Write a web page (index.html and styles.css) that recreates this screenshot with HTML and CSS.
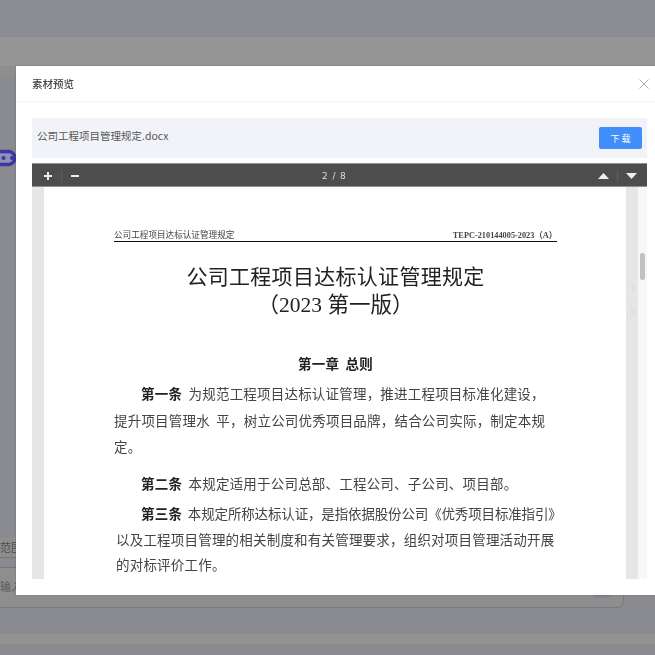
FILE: index.html
```html
<!DOCTYPE html>
<html lang="zh-CN">
<head>
<meta charset="utf-8">
<title>素材预览</title>
<link rel="stylesheet" href="styles.css">
</head>
<body>
<div class="backdrop">
  <div class="band-top"></div>
  <div class="band-light"></div>
  <div class="band-head"></div>
  <div class="page-mid">
    <svg class="bot" width="17" height="18" viewBox="0 0 17 18"><rect x="-6" y="2.500" width="21" height="13" rx="6.500" fill="#8f90b4" stroke="#3b37a3" stroke-width="3.500"/><circle cx="3.500" cy="9" r="2" fill="#3b37a3"/><circle cx="12" cy="9" r="2" fill="#3b37a3"/></svg>
  </div>
  <div class="scope">范围</div>
  <div class="spacer"></div>
  <div class="input-box"><span class="input-hint">输入</span><i class="send"></i></div>
  <div class="band-gap"></div>
  <div class="band-bottom-light"></div>
  <div class="band-end"></div>
</div>
<section class="modal">
  <header class="modal-head">
    <h1 class="modal-title">素材预览</h1>
    <svg class="close" width="10" height="10" viewBox="0 0 10 10"><path d="M.5.5l9 9M9.500.5l-9 9" stroke="#b0b0b0" fill="none"/></svg>
  </header>
  <div class="modal-body">
    <div class="file-bar">
      <span class="file-name">公司工程项目管理规定.docx</span>
      <button class="download">下 载</button>
    </div>
    <div class="toolbar">
      <div class="tool-group">
        <svg class="tool" width="10" height="10" viewBox="0 0 10 10"><path d="M5 1v8M1 5h8" stroke="#eee" stroke-width="2"/></svg>
        <i class="sep"></i>
        <svg class="tool" width="10" height="10" viewBox="0 0 10 10"><path d="M1 5h8" stroke="#eee" stroke-width="2"/></svg>
      </div>
      <span class="pages">2 / 8</span>
      <div class="tool-group right">
        <svg class="tool" width="11" height="6" viewBox="0 0 11 6"><path d="M5.500 0l5.500 6H0z" fill="#eee"/></svg>
        <i class="sep"></i>
        <svg class="tool" width="11" height="6" viewBox="0 0 11 6"><path d="M0 0h11L5.500 6z" fill="#eee"/></svg>
      </div>
    </div>
    <div class="viewer">
      <div class="gutter"></div>
      <article class="paper">
        <div class="running-head"><span>公司工程项目达标认证管理规定</span><span class="code">TEPC-210144005-2023（A）</span></div>
        <h2 class="doc-title">公司工程项目达标认证管理规定</h2>
        <h3 class="doc-sub">（2023 第一版）</h3>
        <h4 class="chapter">第一章&nbsp; 总则</h4>
        <p class="para first"><b>第一条</b>&nbsp; 为规范工程项目达标认证管理，推进工程项目标准化建设，</p>
        <p class="line">提升项目管理水&nbsp; 平，树立公司优秀项目品牌，结合公司实际，制定本规</p>
        <p class="line">定。</p>
        <p class="para second"><b>第二条</b>&nbsp; 本规定适用于公司总部、工程公司、子公司、项目部。</p>
        <p class="para third"><b>第三条</b>&nbsp; 本规定所称达标认证，是指依据股份公司《优秀项目标准指引》</p>
        <p class="line shift">以及工程项目管理的相关制度和有关管理要求，组织对项目管理活动开展</p>
        <p class="line shift">的对标评价工作。</p>
      </article>
      <div class="gutter right-gutter"><span class="ghost">下一页</span></div>
      <div class="scroll-track"><div class="scroll-thumb"></div></div>
    </div>
  </div>
</section>
</body>
</html>
```
FILE: styles.css
```css
* { box-sizing: border-box; }
html, body { margin: 0; height: 655px; overflow: hidden; }
body { position: relative; width: 655px; font-family: "Liberation Serif", "Noto Sans CJK SC", serif; background: #8a8b90; }
.backdrop { height: 655px; display: flex; flex-direction: column; filter: blur(.5px); }
.band-top { height: 37px; flex: none; background: #8b8d92; }
.band-light { height: 29px; flex: none; background: #959595; }
.band-head { height: 12px; flex: none; background: #8e8e8e; }
.page-mid { height: 459px; flex: none; background: #8a8b91; position: relative; }
.bot { position: absolute; left: 0; top: 71px; }
.scope { height: 21px; flex: none; background: #8e8e8e; border-bottom: 1px solid #77787c; font: 11px/20px "Noto Sans CJK SC", sans-serif; color: #4a4a4c; white-space: nowrap; }
.spacer { height: 9px; flex: none; background: #8a8b91; }
.input-box { height: 41px; flex: none; width: 624px; background: #8e8e8e; border: solid #77787c; border-width: 1px 1px 1.500px 0; border-radius: 0 0 7px 0; font: 11px/36px "Noto Sans CJK SC", sans-serif; color: #5b5b5d; position: relative; white-space: nowrap; }
.send { position: absolute; left: 593px; top: 20px; width: 19px; height: 10px; border-radius: 0 0 4px 4px; background: #84848e; }
.band-gap { height: 26px; flex: none; background: #8a8b90; }
.band-bottom-light { height: 10px; flex: none; background: #939393; }
.band-end { flex: 1; background: #8a8b90; }
.modal { position: absolute; left: 16px; top: 66px; width: 660px; height: 529px; background: #fff; display: flex; flex-direction: column; box-shadow: 0 0 2px rgba(0,0,0,.2); }
.modal-head { height: 36px; flex: none; padding: 0 6px 0 16px; width: 639px; display: flex; align-items: center; justify-content: space-between; border-bottom: 1px solid #f4f5f7; }
.modal-title { margin: 0; font: 500 10.500px "Noto Sans CJK SC", sans-serif; color: #444; }
.modal-body { padding: 16px 8px 0 16px; width: 639px; flex: 1; min-height: 0; display: flex; flex-direction: column; }
.file-bar { height: 40px; flex: none; background: #f2f3f8; display: flex; justify-content: space-between; align-items: center; padding: 0 5px; }
.file-name { font: 10.500px "Noto Sans CJK SC", sans-serif; color: #555; margin-top: -5px; }
.download { width: 43px; height: 22px; border: 0; border-radius: 2px; background: #3f8efc; color: #fff; font: 9px "Noto Sans CJK SC", sans-serif; padding: 0; }
.toolbar { margin-top: 5px; height: 24px; flex: none; background: #4d4d4d; border: 1px solid #8f8f8f; border-width: 1px 0; display: flex; align-items: center; justify-content: space-between; padding: 2px 10px 0 11px; position: relative; }
.tool-group { display: flex; align-items: center; gap: 8px; }
.tool { display: block; }
.sep { width: 1px; height: 12px; background: #5d5d5d; }
.pages { position: absolute; left: 290px; font: 9px "DejaVu Sans", sans-serif; color: #ddd; letter-spacing: .9px; }
.viewer { height: 392px; flex: none; display: flex; }
.gutter { width: 12px; flex: none; background: #e6e6e6; }
.right-gutter { padding-top: 97px; overflow: hidden; }
.ghost { display: block; writing-mode: vertical-rl; font: 8px/12px "Noto Sans CJK SC", sans-serif; letter-spacing: 4px; color: #dcdcdc; }
.paper { flex: 1; min-width: 0; padding: 44px 69px 0 70px; color: #333; filter: blur(.35px); }
.running-head { display: flex; justify-content: space-between; border-bottom: 1.500px solid #111; font-size: 8.600px; color: #444; height: 11px; line-height: 9px; white-space: nowrap; }
.code { font-weight: bold; font-size: 8.300px; }
.doc-title { margin: 20px 0 0; font: 400 21px/26px "Noto Sans CJK SC", serif; text-align: center; color: #222; letter-spacing: .3px; white-space: nowrap; }
.doc-sub { margin: 4px 0 0; font: 400 21.500px/26px "Liberation Serif", "Noto Sans CJK SC", serif; text-align: center; color: #222; }
.chapter { margin: 35px 0 0; font: 700 13.500px/20px "Noto Sans CJK SC", sans-serif; text-align: center; color: #222; letter-spacing: .2px; }
.para, .line { margin: 0; font: 13.500px/20px "Noto Sans CJK SC", sans-serif; white-space: nowrap; color: #444; letter-spacing: .2px; }
.para b { font-weight: 700; color: #222; letter-spacing: .2px; }
.para { text-indent: 27px; }
.first { margin-top: 10px; }
.line { margin-top: 6.500px; }
.second { margin-top: 17px; }
.third { margin-top: 10px; letter-spacing: -.15px; }
.line.shift { margin: 5.500px 0 0 2px; }
.scroll-track { width: 9px; flex: none; background: #f7f7f7; position: relative; }
.scroll-thumb { position: absolute; left: 2px; top: 66px; width: 5px; height: 27px; border-radius: 3px; background: #c1c1c1; }
```
